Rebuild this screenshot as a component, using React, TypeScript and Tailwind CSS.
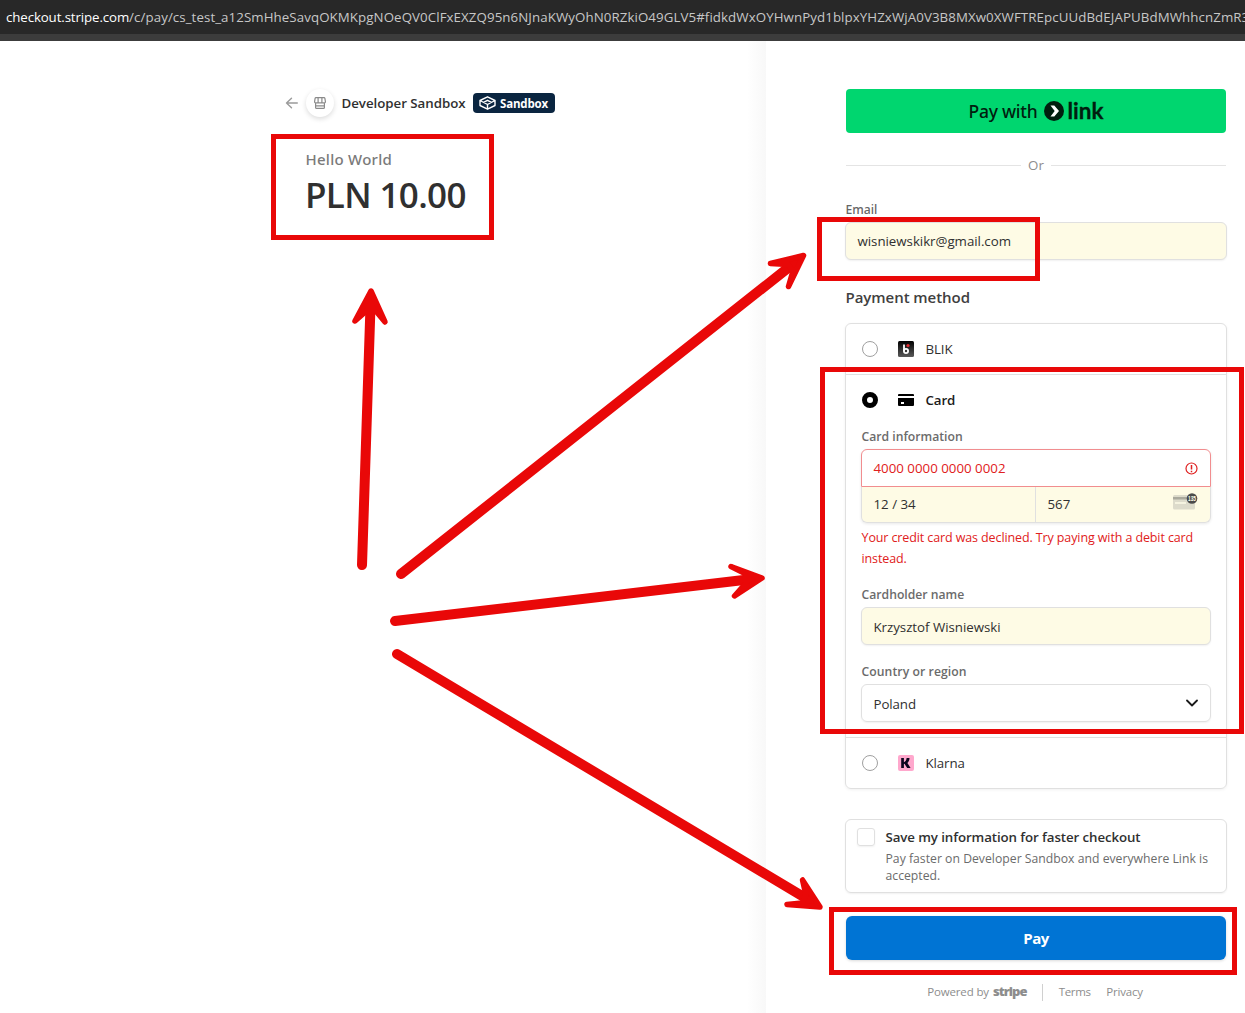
import type { ReactNode } from "react";

const RED = "#e90808";

const ARROWS = [
  { line: "M362 565L370.5 306", head: "M371 291L355 321L367 310.500L375.500 310.500L385 322Z" },
  { line: "M401 574L793 264", head: "M803.500 255.500L770.500 263.500L788 264.500L793 271L788.500 286.500Z" },
  { line: "M395 621L748 579.500", head: "M762 578L731 566.500L746 574L746 583L734.500 596Z" },
  { line: "M397 654L808 899.500", head: "M820 907L802.500 880L806 895.500L802 903L787 904.500Z" },
];

function Annotations() {
  return (
    <div className="pointer-events-none absolute inset-0">
      <svg className="absolute inset-0" width="1245" height="1013" fill="none" stroke={RED} strokeLinecap="round" strokeLinejoin="round">
        {ARROWS.map((a) => (
          <g key={a.line}>
            <path d={a.line} strokeWidth="10" />
            <path d={a.head} strokeWidth="5.500" fill={RED} />
          </g>
        ))}
      </svg>
      <div className="absolute top-[134px] left-[271px] h-[106px] w-[223px] border-5 border-[#e90808]" />
      <div className="absolute top-[217px] left-[817px] h-16 w-[223px] border-5 border-[#e90808]" />
      <div className="absolute top-[367px] left-[820px] h-[367px] w-[424px] border-5 border-[#e90808]" />
      <div className="absolute top-[907px] left-[829px] h-[68px] w-[408px] border-5 border-[#e90808]" />
    </div>
  );
}

function Radio({ checked = false }: { checked?: boolean }) {
  return checked ? (
    <span className="size-4 rounded-full border-5 border-black bg-white" />
  ) : (
    <span className="size-4 rounded-full border border-[#a0a0a0] bg-white" />
  );
}

function StoreIcon() {
  return (
    <svg width="12" height="12" viewBox="0 0 12 12" fill="none" stroke="#8a8a8a" strokeWidth="1.200">
      <path d="M2 .6h8c.5 0 .8.300.9.800l.5 3.200v.4c0 .5-.3.800-.8.800H1.400c-.5 0-.8-.3-.8-.8v-.4l.5-3.200c.1-.5.4-.8.9-.8zM4.100 .8V5.500M7.900 .8V5.500M1.600 6v4.400c0 .6.400 1 1 1h6.800c.6 0 1-.4 1-1V6M2 8.800h8" />
    </svg>
  );
}

function SandboxIcon() {
  return (
    <svg width="17" height="14" viewBox="0 0 17 14" fill="none" stroke="#fff" strokeWidth="1.400" strokeLinejoin="round">
      <path d="M8.500 .8L16 4.500V9.500L8.500 13.200L1 9.500V4.500ZM1 4.500L8.500 8.500L16 4.500M4.500 6.300L8.500 4.300L12.500 6.300M8.500 8.500V13" />
    </svg>
  );
}

function LinkLogo() {
  return (
    <svg className="overflow-visible" width="60" height="22" viewBox="0 0 60 22" fill="#011e0f">
      <circle cx="10" cy="11" r="10" />
      <path d="M6.500 5.500H10.300L15 11L10.300 16.500H6.500L10.700 11Z" fill="#fff" />
      <text x="23.500" y="18.700" fontFamily="Lato" fontSize="22.500" fontWeight="700" textLength="36" lengthAdjust="spacingAndGlyphs" stroke="#011e0f" strokeWidth="0.300">link</text>
    </svg>
  );
}

function BlikIcon() {
  return (
    <svg width="16" height="16" viewBox="0 0 16 16">
      <defs>
        <linearGradient id="blik" x2="0" y2="1">
          <stop stopColor="#000" />
          <stop offset="1" stopColor="#5a5a5a" />
        </linearGradient>
      </defs>
      <rect width="16" height="16" rx="1.500" fill="url(#blik)" />
      <path d="M6 3.500V10" stroke="#fff" strokeWidth="1.800" />
      <circle cx="8" cy="10" r="2.100" fill="none" stroke="#fff" strokeWidth="1.800" />
      <circle cx="10" cy="4.500" r="1.600" fill="#e52b31" />
    </svg>
  );
}

function CardIcon() {
  return (
    <svg width="16" height="12" viewBox="0 0 16 12">
      <path d="M1 0H15Q16 0 16 1V2H0V1Q0 0 1 0ZM0 4H16V11Q16 12 15 12H1Q0 12 0 11ZM3 8V10H6V8Z" fillRule="evenodd" />
    </svg>
  );
}

function KlarnaIcon() {
  return (
    <svg width="16" height="16" viewBox="0 0 16 16">
      <rect width="16" height="16" rx="2" fill="#ffa8cd" />
      <path d="M3.200 3H5.900V7.200C7.600 6.300 8.600 4.800 8.600 3H11.500C11.500 5 10.700 6.800 9.400 8L12.600 13H9.200L6.500 8.800L5.900 9V13H3.200Z" fill="#0b051d" />
    </svg>
  );
}

function ErrorIcon() {
  return (
    <svg width="13" height="13" viewBox="0 0 13 13" fill="none" stroke="#df2020" strokeWidth="1.200">
      <circle cx="6.500" cy="6.500" r="5.500" />
      <path d="M6.500 3V7.500M6.500 8.700V10.200" strokeWidth="1.500" />
    </svg>
  );
}

function CvcIcon() {
  return (
    <svg width="25" height="17" viewBox="0 0 25 17">
      <rect x="0" y="2" width="22" height="14.500" rx="1.500" fill="#dddbcb" />
      <rect x="0" y="4" width="22" height="2.500" fill="#aaa99d" />
      <rect x="2" y="9" width="11" height="2" fill="#f5f3e0" />
      <circle cx="19" cy="5.500" r="5.300" fill="#4b4b4b" />
      <text x="19" y="7.800" textAnchor="middle" fontFamily="Liberation Sans" fontSize="6.500" fontWeight="700" fill="#fffde8" textLength="8" lengthAdjust="spacingAndGlyphs">135</text>
    </svg>
  );
}

function Method({ icon, name, checked }: { icon: ReactNode; name: string; checked?: boolean }) {
  return (
    <div className="flex h-[50px] items-center pl-4">
      <Radio checked={checked} />
      <span className="mr-[11.500px] ml-5 flex">{icon}</span>
      {checked ? (
        <span className="pt-px font-semibold tracking-[-0.1px] text-[#1a1a1a]">{name}</span>
      ) : (
        <span className="pt-px tracking-[-0.1px]">{name}</span>
      )}
    </div>
  );
}

function Label({ children }: { children: ReactNode }) {
  return <div className="h-6 pl-[0.500px] text-[12.2px] leading-6 font-semibold text-[#6b6b6b]">{children}</div>;
}

export default function App() {
  return (
    <div className="relative flex h-[1013px] w-[1245px] flex-col overflow-hidden bg-white font-['Open_Sans',sans-serif] text-[13.3px] text-[#303030]">
      <header className="h-[41px] shrink-0 overflow-hidden border-b-7 border-[#3c3c3c] bg-[#282828] pl-1.5 leading-[34px] whitespace-nowrap text-[#c7c7c7]">
        <span className="tracking-[-0.12px] text-white">checkout.stripe.com</span>
        <span className="tracking-[0.08px]">/c/pay/cs_test_a12SmHheSavqOKMKpgNOeQV0ClFxEXZQ95n6NJnaKWyOhN0RZkiO49GLV5#fidkdWxOYHwnPyd1blpxYHZxWjA0V3B8MXw0XWFTREpcUUdBdEJAPUBdMWhhcnZmR3</span>
      </header>
      <div className="flex grow">
        <section className="w-[766px] bg-linear-to-r from-white from-[97.500%] to-[#f8f8f8] pt-12 pl-[285px]">
          <div className="flex h-7 items-center">
            <svg width="13" height="12" viewBox="0 0 13 12" fill="none" stroke="#9b9b9b" strokeWidth="1.400" strokeLinecap="round" strokeLinejoin="round">
              <path d="M12.300 6H1.500M6.500 1.200L1.500 6L6.500 10.800" />
            </svg>
            <span className="ml-2 flex size-7 items-center justify-center rounded-full bg-white shadow-[0_2px_5px_rgba(0,0,0,0.140)]"><StoreIcon /></span>
            <span className="ml-[7.500px] pt-px font-semibold tracking-[-0.035px]">Developer Sandbox</span>
            <span className="ml-[7px] flex h-5 w-[82px] items-center gap-1 rounded bg-[#0a2540] pl-[6.500px] text-[11.5px] font-bold text-white"><SandboxIcon /><span className="pt-px tracking-[-0.16px]">Sandbox</span></span>
          </div>
          <div className="mt-[30px] ml-[20.500px] font-['Noto_Sans',sans-serif] text-[15px] leading-6 font-medium tracking-[0.26px] text-[#7a7a7a]">Hello World</div>
          <div className="ml-5 text-[35px] leading-[48px] font-semibold tracking-[-0.65px]">PLN 10.00</div>
        </section>

        <section className="flex w-[479px] flex-col pt-12 pl-[79px]">
          <div className="ml-px flex h-11 w-[380px] items-center justify-center rounded bg-[#00d66f] text-[#011e0f]">
            <span className="mr-[6px] font-['Noto_Sans',sans-serif] text-[17.5px] font-medium tracking-[-0.25px]">Pay with</span>
            <LinkLogo />
          </div>
          <div className="mt-[22px] ml-px flex h-5 w-[380px] items-center gap-[7.500px] text-[#8d8d8d]">
            <span className="h-px grow bg-[#e4e4e4]" />
            <span className="pt-px">Or</span>
            <span className="h-px grow bg-[#e4e4e4]" />
          </div>
          <div className="mt-[25px] ml-[0.500px] h-[22px] font-['Noto_Sans',sans-serif] text-[12.2px] leading-5 font-medium text-[#666]">Email</div>
          <div className="flex h-[38px] w-[382px] items-center rounded-md border border-[#e0e0e0] bg-[#fefbe5] pt-0.5 pl-[11.500px] tracking-[-0.03px] shadow-[0_1px_2px_rgba(0,0,0,0.060)]">wisniewskikr@gmail.com</div>
          <div className="mt-[26px] mb-[15px] ml-[0.500px] text-[15px] leading-[22px] font-semibold tracking-[-0.05px] text-[#404040]">Payment method</div>

          <div className="w-[382px] rounded-md border border-[#e0e0e0] shadow-[0_1px_3px_rgba(0,0,0,0.060)]">
            <Method icon={<BlikIcon />} name="BLIK" />
            <div className="border-y border-[#e0e0e0]">
              <Method icon={<CardIcon />} name="Card" checked />
              <div className="px-[15px] pb-[15px]">
                <Label>Card information</Label>
                <div className="h-[74px] rounded-md shadow-[0_1px_3px_rgba(0,0,0,0.090)]">
                  <div className="flex h-[38px] items-center justify-between rounded-t-md border border-[#f18d8f] pr-3 pl-[11.500px] text-[#df2020]">
                    <span className="pt-0.5">4000 0000 0000 0002</span>
                    <ErrorIcon />
                  </div>
                  <div className="flex h-9 rounded-b-md border border-t-0 border-[#e0e0e0] bg-[#fefbe5]">
                    <div className="flex w-[174px] items-center border-r border-[#e0e0e0] pl-[11.500px]">12 / 34</div>
                    <div className="flex grow items-center justify-between pr-3 pl-[11.500px]">
                      567
                      <span className="flex pb-[7px]"><CvcIcon /></span>
                    </div>
                  </div>
                </div>
                <div className="mt-1 mb-3.5 pl-[0.500px] text-[12.5px] leading-[21px] tracking-[-0.112px] text-[#df2020]">Your credit card was declined. Try paying with a debit card instead.</div>
                <Label>Cardholder name</Label>
                <div className="mb-[15px] flex h-[38px] items-center rounded-md border border-[#e0e0e0] bg-[#fefbe5] pt-[3px] pl-[11.500px] tracking-[-0.03px] shadow-[0_1px_2px_rgba(0,0,0,0.060)]">Krzysztof Wisniewski</div>
                <Label><span className="tracking-[0.07px]">Country or region</span></Label>
                <div className="flex h-[38px] items-center justify-between rounded-md border border-[#e0e0e0] pr-3 pl-[11.500px] shadow-[0_1px_2px_rgba(0,0,0,0.060)]">
                  <span className="pt-[3px] tracking-[-0.1px]">Poland</span>
                  <svg width="12" height="8" viewBox="0 0 12 8" fill="none" stroke="#1a1a1a" strokeWidth="1.800" strokeLinecap="round" strokeLinejoin="round"><path d="M1 1.500L6 6.500L11 1.500" /></svg>
                </div>
              </div>
            </div>
            <Method icon={<KlarnaIcon />} name="Klarna" />
          </div>

          <div className="mt-[30px] flex h-[74px] w-[382px] rounded-md border border-[#e0e0e0] pt-2 pl-[11px] shadow-[0_1px_2px_rgba(0,0,0,0.060)]">
            <span className="size-[18px] shrink-0 rounded-[3px] border border-[#e0e0e0] shadow-[0_1px_2px_rgba(0,0,0,0.060)]" />
            <div className="ml-[10.500px]">
              <div className="leading-[18px] font-semibold tracking-[-0.094px] whitespace-nowrap">Save my information for faster checkout</div>
              <div className="mt-1 w-[326px] text-[12.2px] leading-[17px] tracking-[0.02px] text-[#6b6b6b]">Pay faster on Developer Sandbox and everywhere Link is accepted.</div>
            </div>
          </div>
          <div className="mt-[23px] ml-px flex h-11 w-[380px] items-center justify-center rounded-md bg-[#0074d4] text-[15px] font-bold tracking-[-0.5px] text-white shadow-[0_1px_3px_rgba(0,0,0,0.150)]">Pay</div>
          <div className="mt-[22px] flex h-5 w-[380px] items-center justify-center text-[11.5px] tracking-[-0.15px] text-[#8d8d8d]">
            Powered by
            <span className="ml-1 text-[13px] font-extrabold tracking-[-0.95px]">stripe</span>
            <span className="mx-[15.500px] h-[17px] w-px bg-[#d0d0d0]" />
            <span className="tracking-[-0.3px]">Terms</span>
            <span className="ml-[15.500px] tracking-[-0.2px]">Privacy</span>
          </div>
        </section>
      </div>
      <Annotations />
    </div>
  );
}
